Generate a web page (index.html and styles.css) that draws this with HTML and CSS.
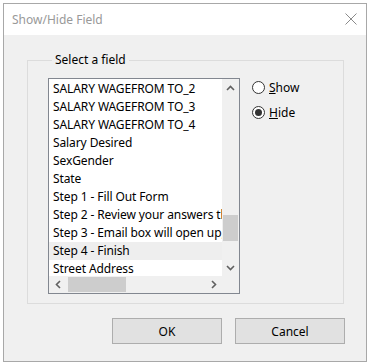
FILE: index.html
```html
<!DOCTYPE html>
<html>
<head>
<meta charset="utf-8">
<link rel="stylesheet" href="styles.css">
</head>
<body>
<div class="window">
  <div class="titlebar">
    <span class="title">Show/Hide Field</span>
    <svg class="close" width="12" height="12" viewBox="0 0 12 12"><path d="M0.5 0.5 L11.5 11.5 M11.5 0.5 L0.5 11.5" stroke="#8a8a8a" stroke-width="1" fill="none"/></svg>
  </div>
  <div class="body">
    <fieldset class="group">
      <legend class="legend">Select a field</legend>
      <div class="group-inner">
        <div class="listbox">
          <div class="list-main">
            <div class="rows">
              <div class="row">SALARY WAGEFROM TO_2</div>
              <div class="row">SALARY WAGEFROM TO_3</div>
              <div class="row">SALARY WAGEFROM TO_4</div>
              <div class="row">Salary Desired</div>
              <div class="row">SexGender</div>
              <div class="row">State</div>
              <div class="row">Step 1 - Fill Out Form</div>
              <div class="row">Step 2 - Review your answers then submit</div>
              <div class="row">Step 3 - Email box will open up, send</div>
              <div class="row sel">Step 4 - Finish</div>
              <div class="row">Street Address</div>
            </div>
            <div class="vscroll">
              <div class="arrow"><svg width="9" height="6" viewBox="0 0 9 6"><path d="M1 5 L4.5 1.5 L8 5" stroke="#606060" stroke-width="1.6" fill="none"/></svg></div>
              <div class="vtrack"><div class="vthumb"></div></div>
              <div class="arrow"><svg width="9" height="6" viewBox="0 0 9 6"><path d="M1 1 L4.5 4.5 L8 1" stroke="#606060" stroke-width="1.6" fill="none"/></svg></div>
            </div>
          </div>
          <div class="list-bottom">
            <div class="hscroll">
              <div class="harrow"><svg width="6" height="9" viewBox="0 0 6 9"><path d="M5 1 L1.5 4.5 L5 8" stroke="#606060" stroke-width="1.6" fill="none"/></svg></div>
              <div class="htrack"><div class="hthumb"></div></div>
              <div class="harrow"><svg width="6" height="9" viewBox="0 0 6 9"><path d="M1 1 L4.5 4.5 L1 8" stroke="#606060" stroke-width="1.6" fill="none"/></svg></div>
            </div>
            <div class="corner"></div>
          </div>
        </div>
        <div class="radios">
          <label class="radio"><span class="circle"></span><span><u>S</u>how</span></label>
          <label class="radio"><span class="circle checked"></span><span><u>H</u>ide</span></label>
        </div>
      </div>
    </fieldset>
    <div class="buttons">
      <div class="btn">OK</div>
      <div class="btn">Cancel</div>
    </div>
  </div>
</div>
</body>
</html>
```

FILE: styles.css
```css
html, body {
  margin: 0;
  padding: 0;
  background: #ffffff;
}
body {
  font-family: "Noto Sans", "Open Sans", sans-serif;
  font-size: 12px;
  color: #000;
}
.window {
  margin: 3px;
  width: 362px;
  height: 357px;
  border: 1px solid #a8a8a8;
  display: flex;
  flex-direction: column;
}
.titlebar {
  height: 31px;
  background: #fff;
  display: flex;
  align-items: center;
  justify-content: space-between;
  padding: 0 9px 0 8px;
}
.title {
  color: #999;
  font-size: 12px;
}
.close {
  display: block;
  margin-top: -1px;
}
.body {
  flex: 1;
  background: #f0f0f0;
  display: flex;
  flex-direction: column;
  padding: 17px 21px 17px 23px;
}
.group {
  margin: 0;
  padding: 0 0 9px 20px;
  border: 1px solid #dcdcdc;
  width: 317px;
  box-sizing: border-box;
  min-inline-size: 0;
}
.legend {
  margin-left: 4px;
  padding: 0 3px 0 3px;
  line-height: 16px;
  color: #000;
}
.group-inner {
  display: flex;
  margin-top: 10px;
}
.listbox {
  width: 190px;
  height: 214px;
  border: 1px solid #828790;
  background: #fff;
  display: flex;
  flex-direction: column;
}
.list-main {
  display: flex;
  height: 197px;
}
.rows {
  flex: 1;
  overflow: hidden;
  padding-top: 1px;
}
.row {
  height: 18px;
  line-height: 18px;
  padding-left: 4px;
  white-space: nowrap;
  overflow: hidden;
  letter-spacing: -0.1px;
}
.row.sel {
  background: #eeeeee;
}
.vscroll {
  width: 17px;
  background: #f0f0f0;
  display: flex;
  flex-direction: column;
}
.arrow {
  height: 17px;
  display: flex;
  align-items: center;
  justify-content: center;
}
.arrow svg, .harrow svg {
  display: block;
}
.vtrack {
  flex: 1;
  display: flex;
  flex-direction: column;
  padding-top: 119px;
}
.vthumb {
  height: 26px;
  margin: 0 1px;
  background: #cdcdcd;
}
.list-bottom {
  display: flex;
  height: 17px;
}
.hscroll {
  flex: 1;
  background: #f0f0f0;
  display: flex;
}
.harrow {
  width: 17px;
  display: flex;
  align-items: center;
  justify-content: center;
}
.htrack {
  flex: 1;
  display: flex;
  padding-left: 2px;
}
.hthumb {
  width: 58px;
  margin: 1px 0;
  background: #cdcdcd;
}
.corner {
  width: 17px;
  background: #f0f0f0;
}
.radios {
  display: flex;
  flex-direction: column;
  gap: 7px;
  margin-left: 12px;
  padding-top: 0;
}
.radio {
  display: flex;
  align-items: center;
  gap: 4px;
  height: 18px;
}
.circle {
  width: 11px;
  height: 11px;
  border: 1px solid #333;
  border-radius: 50%;
  background: #fff;
  display: flex;
  align-items: center;
  justify-content: center;
}
.circle.checked::after {
  content: "";
  width: 7px;
  height: 7px;
  border-radius: 50%;
  background: #333;
}
.buttons {
  display: flex;
  justify-content: flex-end;
  gap: 13px;
  margin-top: 14px;
}
.btn {
  width: 108px;
  height: 24px;
  border: 1px solid #adadad;
  background: #e1e1e1;
  display: flex;
  align-items: center;
  justify-content: center;
}
```
